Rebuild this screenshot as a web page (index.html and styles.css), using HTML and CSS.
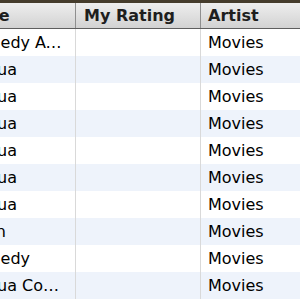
FILE: index.html
```html
<!DOCTYPE html>
<html lang="en">
<head>
    <meta charset="UTF-8">
    <title>Library</title>
    <link rel="stylesheet" href="styles.css">
</head>
<body>
    <div class="toolbar-edge"></div>
    <div class="list">
        <div class="row head">
            <div class="cell name">Name</div>
            <div class="cell rating">My Rating</div>
            <div class="cell artist">Artist</div>
        </div>
        <div class="row">
            <div class="cell name">Comedy Awards Special</div>
            <div class="cell rating"></div>
            <div class="cell artist">Movies</div>
        </div>
        <div class="row">
            <div class="cell name">Joshua</div>
            <div class="cell rating"></div>
            <div class="cell artist">Movies</div>
        </div>
        <div class="row">
            <div class="cell name">Joshua</div>
            <div class="cell rating"></div>
            <div class="cell artist">Movies</div>
        </div>
        <div class="row">
            <div class="cell name">Joshua</div>
            <div class="cell rating"></div>
            <div class="cell artist">Movies</div>
        </div>
        <div class="row">
            <div class="cell name">Joshua</div>
            <div class="cell rating"></div>
            <div class="cell artist">Movies</div>
        </div>
        <div class="row">
            <div class="cell name">Joshua</div>
            <div class="cell rating"></div>
            <div class="cell artist">Movies</div>
        </div>
        <div class="row">
            <div class="cell name">Joshua</div>
            <div class="cell rating"></div>
            <div class="cell artist">Movies</div>
        </div>
        <div class="row">
            <div class="cell name">Brian</div>
            <div class="cell rating"></div>
            <div class="cell artist">Movies</div>
        </div>
        <div class="row">
            <div class="cell name">Comedy</div>
            <div class="cell rating"></div>
            <div class="cell artist">Movies</div>
        </div>
        <div class="row">
            <div class="cell name">Joshua Cooper</div>
            <div class="cell rating"></div>
            <div class="cell artist">Movies</div>
        </div>
    </div>
</body>
</html>
```

FILE: styles.css
```css
body {
    margin: 0;
    padding: 0;
    background-color: #ffffff;
    font-family: "DejaVu Sans", Verdana, sans-serif;
    font-size: 16px;
    color: #000000;
    overflow: hidden;
}
.toolbar-edge {
    height: 3px;
    background-color: #453c2c;
}
.list {
    margin-left: -42px;
}
.row {
    display: grid;
    grid-template-columns: 118px 125px 1fr;
    height: 27px;
    align-items: stretch;
}
.row:nth-child(odd) {
    background-color: #eef3fb;
}
.cell {
    display: flex;
    align-items: center;
    white-space: nowrap;
    overflow: hidden;
    border-right: 1px solid #d9d9d9;
}
.cell.artist {
    border-right: none;
    padding-left: 7px;
}
.cell.rating {
    padding-left: 8px;
}
.cell.name {
    display: block;
    line-height: 27px;
    padding: 0 10px 0 6px;
    text-overflow: ellipsis;
}
.row.head {
    height: 25px;
    background: linear-gradient(#eeeeee, #d2d2d2);
    border-bottom: 1px solid #5e5e5e;
    font-weight: bold;
    color: #1e1e1e;
}
.row.head .cell {
    border-right: 1px solid #8f8f8f;
}
.row.head .cell.artist {
    border-right: none;
}
.row.head .cell.name {
    line-height: 25px;
    padding-left: 0;
}
```
